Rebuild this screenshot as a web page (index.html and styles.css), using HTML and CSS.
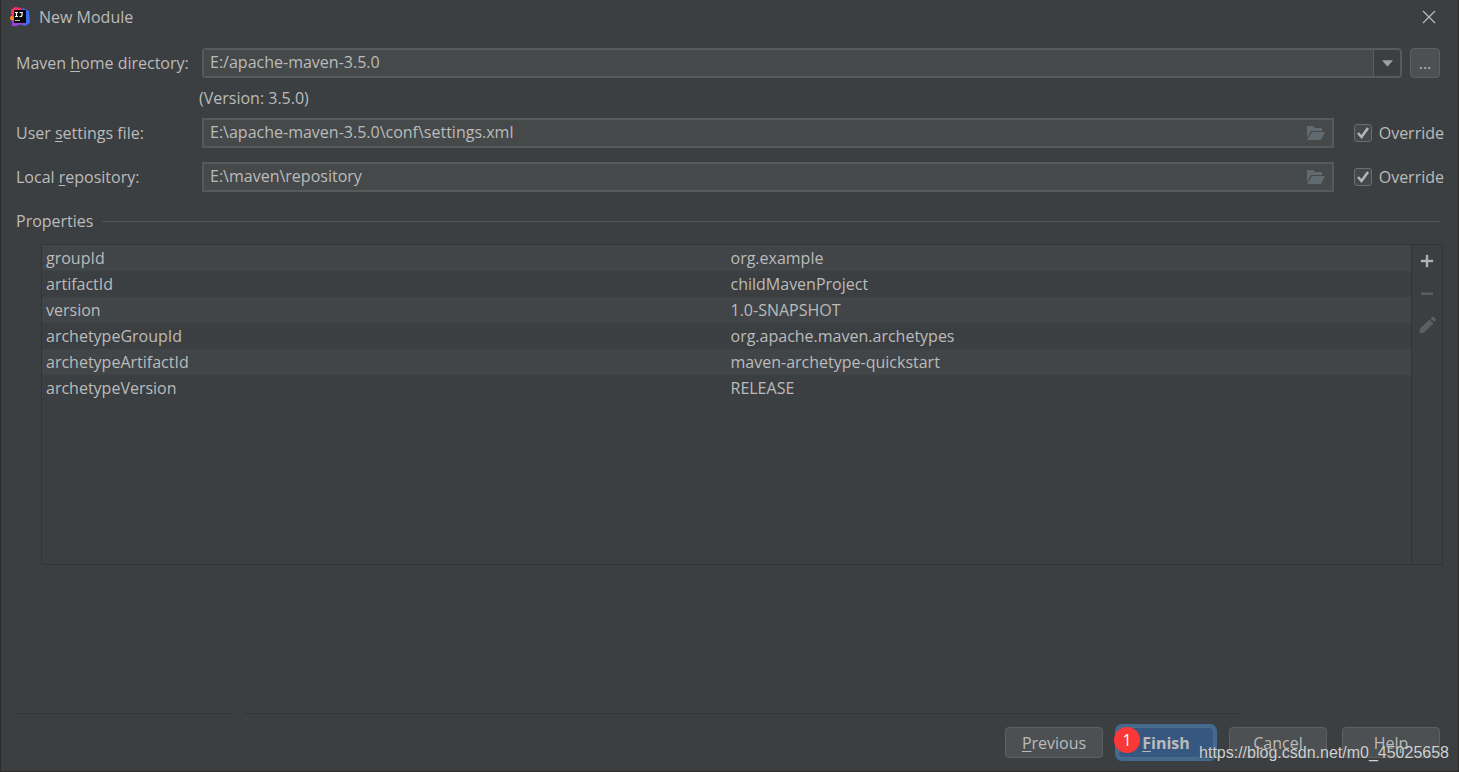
FILE: index.html
```html
<!DOCTYPE html>
<html lang="en">
<head>
<meta charset="utf-8">
<meta name="viewport" content="width=device-width, initial-scale=1">
<title>New Module</title>
<link rel="stylesheet" href="styles.css">
</head>
<body>
<div class="dialog">
  <header class="titlebar">
    <svg class="logo" viewBox="0 0 20 20" aria-hidden="true">
      <path fill="#f5831f" d="M0 10 5 6v8l-3 0-2-2z"/>
      <path fill="#fe2d63" d="M1 3 5 0l6 1 2 3-8 8-4-5z"/>
      <path fill="#3d6bf0" d="m13 1 6 3 1 12-5 3-7-2 4-14z"/>
      <path fill="#9b3fd5" d="M2 13h9l5 5-6-1-3 2H2z"/>
      <path fill="#080808" d="M4 3h12v13H4z"/>
      <path fill="none" stroke="#fff" stroke-width="1.200" d="M5 5.500h3M6.500 5.500v4M5 9.500h3M9.500 5.500h3.300M12 5.500v2.700q0 1.300-1.400 1.300H9.500"/>
      <path fill="#bbb" d="M5 13h5v1H5z"/>
    </svg>
    <h1 class="title">New Module</h1>
    <button class="close" type="button" aria-label="Close">
      <svg viewBox="0 0 14 14"><path d="m1 1 12 12M13 1 1 13"/></svg>
    </button>
  </header>

  <form class="form">
    <div class="row">
      <label class="label" for="home">Maven <u>h</u>ome directory:</label>
      <div class="combo">
        <input class="combo-input" id="home" type="text" value="E:/apache-maven-3.5.0">
        <button class="combo-arrow" type="button" aria-label="Show directories">
          <svg viewBox="0 0 12 7"><path d="M0 0h12L6 7z"/></svg>
        </button>
      </div>
      <button class="browse" type="button" aria-label="Browse">...</button>
    </div>
    <p class="version">(Version: 3.5.0)</p>
    <div class="row">
      <label class="label" for="settings">User <u>s</u>ettings file:</label>
      <div class="file">
        <input class="file-input" id="settings" type="text" value="E:\apache-maven-3.5.0\conf\settings.xml">
        <svg class="folder" viewBox="0 0 20 16" aria-hidden="true"><path d="M1 1h6l2 2h7v3H5L1 13zM6 7h13l-4 8H1z"/></svg>
      </div>
      <label class="override"><input class="check" type="checkbox" checked>Override</label>
    </div>
    <div class="row">
      <label class="label" for="repo">Local <u>r</u>epository:</label>
      <div class="file">
        <input class="file-input" id="repo" type="text" value="E:\maven\repository">
        <svg class="folder" viewBox="0 0 20 16" aria-hidden="true"><path d="M1 1h6l2 2h7v3H5L1 13zM6 7h13l-4 8H1z"/></svg>
      </div>
      <label class="override"><input class="check" type="checkbox" checked>Override</label>
    </div>
  </form>

  <h2 class="section">Properties</h2>
  <div class="properties">
    <div class="table-area">
      <table class="table">
        <tbody>
          <tr><td>groupId</td><td>org.example</td></tr>
          <tr><td>artifactId</td><td>childMavenProject</td></tr>
          <tr><td>version</td><td>1.0-SNAPSHOT</td></tr>
          <tr><td>archetypeGroupId</td><td>org.apache.maven.archetypes</td></tr>
          <tr><td>archetypeArtifactId</td><td>maven-archetype-quickstart</td></tr>
          <tr><td>archetypeVersion</td><td>RELEASE</td></tr>
        </tbody>
      </table>
    </div>
    <div class="tools">
      <button class="tool" type="button" aria-label="Add"><svg viewBox="0 0 20 20"><path fill="#afb1b3" d="M9 4h2v5h5v2h-5v5H9v-5H4V9h5z" stroke="#afb1b3" stroke-width=".4"/></svg></button>
      <button class="tool" type="button" aria-label="Remove" disabled><svg viewBox="0 0 20 20"><path fill="#5c5e60" d="M4 9.500h12v2.400H4z"/></svg></button>
      <button class="tool" type="button" aria-label="Edit" disabled><svg viewBox="0 0 20 20"><path fill="#5c5e60" d="m12.500 4.500 4 4L6.500 18H2.500v-4zM13.500 3.500 15 2q1-.8 2 0l1.500 1.500q.8 1 0 2L17.300 7z"/></svg></button>
    </div>
  </div>

  <footer class="footer">
    <div class="rules"><hr class="rule rule-side"><hr class="rule rule-main"></div>
    <div class="actions">
      <button class="btn" type="button"><u>P</u>revious</button>
      <div class="marked">
        <button class="btn btn-primary" type="button"><u>F</u>inish</button>
        <span class="badge">1</span>
      </div>
      <button class="btn" type="button">Cancel</button>
      <button class="btn" type="button">Help</button>
    </div>
    <span class="watermark">https://blog.csdn.net/m0_45025658</span>
  </footer>
</div>
</body>
</html>
```
FILE: styles.css
```css
* { box-sizing: border-box; }

body {
  margin: 0;
  background: #3c3f41;
  color: #bbbbbb;
  font: 16px/20px "Open Sans", "Noto Sans", sans-serif;
}

button, input { font: inherit; color: inherit; }
button { padding: 0; }
u { text-underline-offset: 2px; text-decoration-thickness: 1px; }

.dialog {
  display: flex;
  flex-direction: column;
  min-height: 100vh;
  border: solid #2b2b2b;
  border-width: 0 1px 1px;
}

.titlebar {
  display: flex;
  align-items: center;
  height: 34px;
  padding: 0 22px 0 9px;
}
.logo { width: 20px; height: 20px; margin-right: 9px; }
.title { flex: 1; margin: 0; font-size: 16px; font-weight: 400; }
.close { display: flex; border: 0; background: none; }
.close svg { width: 14px; height: 14px; fill: none; stroke: #bbbbbb; stroke-width: 1.2; }

.form { padding: 14px 18px 0 15px; }
.row {
  display: flex;
  align-items: center;
  height: 30px;
  margin-bottom: 14px;
}
.label { flex: 0 0 186px; }

.combo {
  display: flex;
  flex: 1;
  height: 30px;
  margin-right: 8px;
  border: 2px solid #575a5b;
  border-radius: 4px;
}
.combo-input, .file-input {
  flex: 1;
  min-width: 0;
  padding: 0 6px 2px;
  border: 0;
  outline: 0;
  background: #45494a;
}
.combo-arrow {
  display: grid;
  place-items: center;
  width: 27px;
  border: 0;
  border-left: 1px solid #5b5d5e;
  background: none;
}
.combo-arrow svg { width: 11px; height: 7px; fill: #9da0a2; }
.browse {
  width: 30px;
  height: 30px;
  border: 1px solid #5e6060;
  border-radius: 4px;
  background: #4c5052;
}

.version { margin: -4px 0 10px 183px; }

.file {
  display: flex;
  align-items: center;
  flex: 1;
  height: 30px;
  padding-right: 6px;
  border: 2px solid #575a5b;
  background: #45494a;
}
.file-input { height: 26px; }
.folder { width: 20px; height: 16px; fill: #606a6f; }

.override {
  display: flex;
  align-items: center;
  gap: 7px;
  flex: 0 0 107px;
  padding-left: 20px;
  margin-right: -4px;
}
.check {
  appearance: none;
  width: 18px;
  height: 18px;
  margin: 0;
  border: 1px solid #6b6d6e;
  border-radius: 3px;
  background: #43494a;
}
.check:checked {
  background: #43494a url("data:image/svg+xml,%3Csvg xmlns='http://www.w3.org/2000/svg' viewBox='0 0 16 16'%3E%3Cpath d='M3 8l3.500 4L13 3' fill='none' stroke='%23b4b4b4' stroke-width='2.600'/%3E%3C/svg%3E") center / 16px 16px no-repeat;
}

.section {
  display: flex;
  align-items: center;
  gap: 9px;
  margin: 5px 18px 13px 15px;
  font-size: 16px;
  font-weight: 400;
}
.section::after { content: ""; flex: 1; height: 1px; background: #515456; }

.properties {
  display: flex;
  min-height: 321px;
  margin: 0 15px 20px 40px;
  border: 1px solid #323435;
}
.table-area { flex: 1; }
.table { width: 100%; border-collapse: collapse; table-layout: fixed; }
.table td { height: 26px; padding: 0 4px; line-height: 26px; }
.table tr:nth-child(odd) { background: #414547; }
.tools {
  display: flex;
  flex-direction: column;
  gap: 12px;
  width: 31px;
  padding: 6px 5px;
  border-left: 1px solid #323435;
}
.tool { height: 20px; border: 0; background: none; }
.tool svg { display: block; width: 20px; height: 20px; }

.footer {
  position: relative;
  margin-top: auto;
  padding: 0 18px 13px 15px;
}
.rules { display: flex; gap: 13px; margin-right: 198px; }
.rule { height: 1px; margin: 0; border: 0; background: #323435; }
.rule-side { flex: 0 0 214px; }
.rule-main { flex: 1; }
.actions {
  display: flex;
  justify-content: flex-end;
  gap: 15px;
  padding-top: 13px;
}
.btn {
  width: 98px;
  height: 31px;
  border: 1px solid #5e6060;
  border-radius: 4px;
  background: #4c5052;
}
.marked { position: relative; }
.btn-primary {
  width: 96px;
  border-color: #4c708c;
  background: #365880;
  box-shadow: 0 0 0 3px #43698e;
  font-weight: 700;
}
.badge {
  position: absolute;
  top: 0;
  left: -4px;
  width: 26px;
  height: 26px;
  border-radius: 50%;
  background: #fb3838;
  color: #ffffff;
  line-height: 26px;
  text-align: center;
}
.watermark {
  position: absolute;
  right: 9px;
  bottom: 8px;
  color: #d0d1d2;
  font: 16px/20px "Liberation Sans", Arial, sans-serif;
  text-shadow: 0 1px 1px #3c3f41;
  pointer-events: none;
}
```
